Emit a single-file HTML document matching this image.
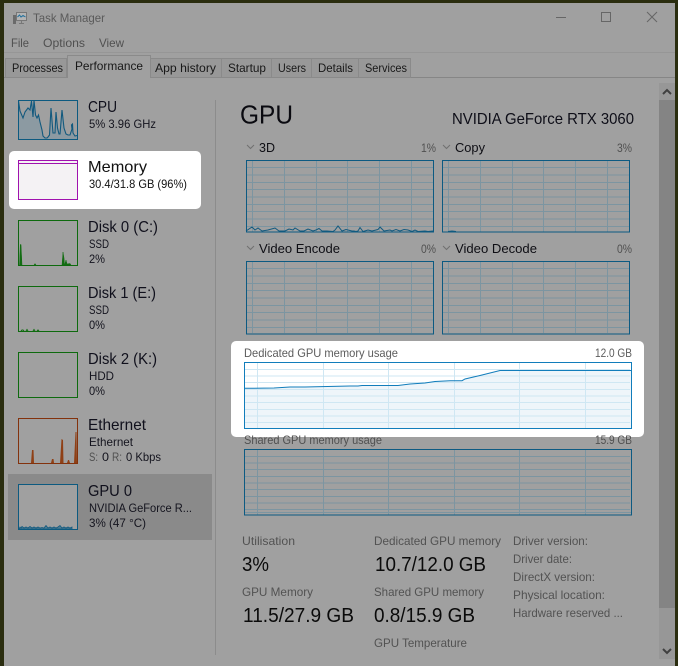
<!DOCTYPE html>
<html><head><meta charset="utf-8"><style>
html,body{margin:0;padding:0;background:#a0a0a0;width:678px;height:666px;overflow:hidden}
svg{display:block;position:absolute;left:0;top:0}
text{font-family:"Liberation Sans",sans-serif;font-size:12px;fill:#1a1a1a}
.g{fill:#505050}.t{font-size:16px;fill:#10101c}.s{font-size:12px;fill:#14141e}
.l{font-size:12px;fill:#525252}.v{font-size:20px;fill:#0a0a0a}.tb{fill:#181818}
</style></head><body>
<svg width="678" height="666" viewBox="0 0 678 666" xmlns="http://www.w3.org/2000/svg">
<defs>
<g id="g1" fill="none">
<path d="M1 7.500H187M1 15H187M1 22.500H187M1 29.500H187M1 37H187M1 44.500H187M1 51.500H187M1 59H187M1 66.500H187M6.500 1V72M38.500 1V72M70.500 1V72M101.500 1V72M133.500 1V72M165.500 1V72"/>
</g>
<g id="g2" fill="none">
<path d="M1 7.500H386M1 14H386M1 20.500H386M1 27.500H386M1 34H386M1 40.500H386M1 47.500H386M1 54H386M1 60.500H386M13.500 1V66M79.500 1V66M144.500 1V66M210.500 1V66M275.500 1V66M341.500 1V66"/>
</g>
</defs>
<rect width="678" height="666" fill="#a0a0a0"/>
<rect width="678" height="3" fill="#2a2d0f"/>
<rect width="4" height="666" fill="#2a2d0f"/>
<rect x="675" width="3" height="666" fill="#2a2d0f"/>

<!-- title -->
<g fill="none">
<rect x="13" y="15" width="3" height="9" fill="#6a6a6a"/>
<rect x="16.500" y="12.500" width="10" height="8" fill="#b4b4b4" stroke="#777"/>
<path d="M17.500 17L19.500 15L21 17L23 15.500L25.500 17" stroke="#1f6f9c"/>
<path d="M19 23.500H24M21.500 21V23" stroke="#777"/>
</g>
<text x="33" y="22" textLength="72" lengthAdjust="spacingAndGlyphs" style="fill:#5a5a5a">Task Manager</text>
<path d="M556 17.500H566" stroke="#666"/>
<rect x="601.500" y="12.500" width="9" height="9" fill="none" stroke="#666"/>
<path d="M647 12L657 22M657 12L647 22" stroke="#666" fill="none"/>

<!-- menu -->
<text x="11" y="47" textLength="18" lengthAdjust="spacingAndGlyphs" class="g">File</text>
<text x="43" y="47" textLength="42" lengthAdjust="spacingAndGlyphs" class="g">Options</text>
<text x="99" y="47" textLength="25" lengthAdjust="spacingAndGlyphs" class="g">View</text>
<rect x="4" y="52" width="671" height="1" fill="#969696"/>

<!-- tabs -->
<rect x="4" y="77" width="671" height="1" fill="#868686"/>
<g fill="#989898" stroke="#8a8a8a">
<rect x="5.500" y="58.500" width="61" height="19"/>
<rect x="150.500" y="58.500" width="71" height="19"/>
<rect x="221.500" y="58.500" width="50" height="19"/>
<rect x="271.500" y="58.500" width="40" height="19"/>
<rect x="311.500" y="58.500" width="47" height="19"/>
<rect x="358.500" y="58.500" width="52" height="19"/>
</g>
<path d="M67.500 78V55.500H150.500V78" fill="#a0a0a0" stroke="#8a8a8a"/>
<rect x="68" y="76" width="82" height="3" fill="#a0a0a0"/>
<text x="12" y="72" textLength="51" lengthAdjust="spacingAndGlyphs" class="tb">Processes</text>
<text x="75" y="70" textLength="68" lengthAdjust="spacingAndGlyphs" class="tb">Performance</text>
<text x="155" y="72" textLength="61" lengthAdjust="spacingAndGlyphs" class="tb">App history</text>
<text x="228" y="72" textLength="38" lengthAdjust="spacingAndGlyphs" class="tb">Startup</text>
<text x="278" y="72" textLength="28" lengthAdjust="spacingAndGlyphs" class="tb">Users</text>
<text x="318" y="72" textLength="35" lengthAdjust="spacingAndGlyphs" class="tb">Details</text>
<text x="365" y="72" textLength="42" lengthAdjust="spacingAndGlyphs" class="tb">Services</text>

<!-- sidebar -->
<rect x="8" y="474" width="204" height="66" fill="#8a8a8a"/>
<rect x="215" y="100" width="1" height="555" fill="#8c8c8c"/>
<rect x="9" y="151" width="192" height="58" rx="5" fill="#fff"/>

<!-- CPU -->
<path d="M18.500 101L20 111L23 118L25 112L28 108L30 110L31.500 101L33 117L34 100L35.500 115L37 118L38.500 115L40 122L42 130L43 136L45 138H47L48 137L49.500 135L51 113L53 133H55L56 115L57.500 128L59 134L60 134L62 110L64 128L66 134L68 135H70L72 129L71.500 125L72.500 124L73 133L75 136L77 135.500L78 139H18.500Z" fill="#8c9aa2"/>
<path d="M18.500 101L20 111L23 118L25 112L28 108L30 110L31.500 101L33 117L34 100L35.500 115L37 118L38.500 115L40 122L42 130L43 136L45 138H47L48 137L49.500 135L51 108L53 133H55L56 112L57.500 128L59 134L60 134L62 110L64 128L66 134L68 135H70L72 129L71.500 125L72.500 124L73 133L75 136L77 135.500" fill="none" stroke="#12597e" stroke-width="1.100"/>
<rect x="18.500" y="100.500" width="59" height="39" fill="none" stroke="#0d5a80"/>
<text x="88" y="112" textLength="29" lengthAdjust="spacingAndGlyphs" class="t">CPU</text>
<text x="89" y="128" textLength="67" lengthAdjust="spacingAndGlyphs" class="s">5%  3.96 GHz</text>

<!-- Memory -->
<rect x="18.500" y="160.500" width="59" height="39" fill="#f4f2f4" stroke="#a012ae"/>
<path d="M19 163.500H77" stroke="#a012ae"/>
<text x="88" y="172" textLength="59" lengthAdjust="spacingAndGlyphs" class="t" style="fill:#111">Memory</text>
<text x="89" y="188" textLength="98" lengthAdjust="spacingAndGlyphs" class="s" style="fill:#111">30.4/31.8 GB (96%)</text>

<!-- Disk 0 -->
<path d="M19.500 265L20.300 244.500L21 244.500L22 265ZM34 265L35 263.500L36 265ZM62 265L63 252L64 258L64.500 265ZM64.500 265L66 260L67 264L70 263.500L71 265Z" fill="#126c12" stroke="#126c12" stroke-width=".5"/>
<rect x="18.500" y="220.500" width="59" height="45" fill="none" stroke="#0e6a0e"/>
<text x="88" y="232" textLength="70" lengthAdjust="spacingAndGlyphs" class="t">Disk 0 (C:)</text>
<text x="89" y="248" textLength="20" lengthAdjust="spacingAndGlyphs" class="s">SSD</text>
<text x="89" y="263" textLength="16" lengthAdjust="spacingAndGlyphs" class="s">2%</text>

<!-- Disk 1 -->
<path d="M21 331L22 330H23L24 331M26 331L27 329.500L28 331M33 331L34 329.500L35 331M37 331L38 330L39 331" fill="none" stroke="#126c12"/>
<rect x="18.500" y="286.500" width="59" height="45" fill="none" stroke="#0e6a0e"/>
<text x="88" y="298" textLength="68" lengthAdjust="spacingAndGlyphs" class="t">Disk 1 (E:)</text>
<text x="89" y="314" textLength="20" lengthAdjust="spacingAndGlyphs" class="s">SSD</text>
<text x="89" y="329" textLength="16" lengthAdjust="spacingAndGlyphs" class="s">0%</text>

<!-- Disk 2 -->
<rect x="18.500" y="352.500" width="59" height="45" fill="none" stroke="#0e6a0e"/>
<text x="88" y="364" textLength="69" lengthAdjust="spacingAndGlyphs" class="t">Disk 2 (K:)</text>
<text x="89" y="380" textLength="25" lengthAdjust="spacingAndGlyphs" class="s">HDD</text>
<text x="89" y="395" textLength="16" lengthAdjust="spacingAndGlyphs" class="s">0%</text>

<!-- Ethernet -->
<path d="M31 463L32 450L33.500 450L34 463ZM51 463L52 459L53.500 459L54 463ZM60 463L61.500 439L63 440L63.500 463ZM67 463L68 460L69 460L70 463ZM74 463L75.500 432L76.500 432L77 463Z" fill="#8f4016"/>
<rect x="18.500" y="418.500" width="59" height="45" fill="none" stroke="#83320c"/>
<text x="88" y="430" textLength="58" lengthAdjust="spacingAndGlyphs" class="t">Ethernet</text>
<text x="89" y="446" textLength="44" lengthAdjust="spacingAndGlyphs" class="s">Ethernet</text>
<text x="89" y="461" textLength="9" lengthAdjust="spacingAndGlyphs" class="g">S:</text>
<text x="102" y="461" textLength="7" lengthAdjust="spacingAndGlyphs" class="s">0</text>
<text x="112" y="461" textLength="10" lengthAdjust="spacingAndGlyphs" class="g">R:</text>
<text x="126" y="461" textLength="35" lengthAdjust="spacingAndGlyphs" class="s">0 Kbps</text>

<!-- GPU 0 -->
<rect x="19" y="485" width="58" height="44" fill="#a0a0a0"/>
<path d="M19 529L20 527L21 528L22 526.500L24 528L26 527L28 528L30 526.500L32 528L34 527L36 528L38 527L40 528L42 527.500L44 528L46 525.500L48 528L50 527L52 528L54 527L56 528L58 527L60 525.500L62 528L64 527L66 528L68 527L70 528L72 527L72 529Z" fill="#4f7c92" stroke="#12597e" stroke-width=".8"/>
<rect x="18.500" y="484.500" width="59" height="45" fill="none" stroke="#0d5a80"/>
<text x="88" y="496" textLength="44" lengthAdjust="spacingAndGlyphs" class="t">GPU 0</text>
<text x="89" y="512" textLength="103" lengthAdjust="spacingAndGlyphs" class="s">NVIDIA GeForce R...</text>
<text x="89" y="527" textLength="57" lengthAdjust="spacingAndGlyphs" class="s">3%  (47 °C)</text>

<!-- Main header -->
<text x="240" y="123.500" textLength="53" lengthAdjust="spacingAndGlyphs" style="font-size:26px;fill:#0a0a10">GPU</text>
<text x="452" y="124" textLength="182" lengthAdjust="spacingAndGlyphs" style="font-size:16px;fill:#0e0e18">NVIDIA GeForce RTX 3060</text>

<!-- small graphs labels -->
<g fill="none" stroke="#707070">
<path d="M247 145L250.500 148.500L254 145M443 145L446.500 148.500L450 145M247 246L250.500 249.500L254 246M443 246L446.500 249.500L450 246"/>
</g>
<text x="259" y="152" textLength="16" lengthAdjust="spacingAndGlyphs" style="font-size:13px;fill:#0e0e14">3D</text>
<text x="421" y="152" textLength="15" lengthAdjust="spacingAndGlyphs" class="g">1%</text>
<text x="455" y="152" textLength="30" lengthAdjust="spacingAndGlyphs" style="font-size:13px;fill:#0e0e14">Copy</text>
<text x="617" y="152" textLength="15" lengthAdjust="spacingAndGlyphs" class="g">3%</text>
<text x="259" y="253" textLength="81" lengthAdjust="spacingAndGlyphs" style="font-size:13px;fill:#0e0e14">Video Encode</text>
<text x="421" y="253" textLength="15" lengthAdjust="spacingAndGlyphs" class="g">0%</text>
<text x="455" y="253" textLength="82" lengthAdjust="spacingAndGlyphs" style="font-size:13px;fill:#0e0e14">Video Decode</text>
<text x="617" y="253" textLength="15" lengthAdjust="spacingAndGlyphs" class="g">0%</text>

<!-- small graphs -->
<use href="#g1" x="246" y="160" stroke="#7c95a1"/>
<use href="#g1" x="442" y="160" stroke="#7c95a1"/>
<use href="#g1" x="246" y="261" stroke="#7c95a1"/>
<use href="#g1" x="442" y="261" stroke="#7c95a1"/>
<path d="M246 231L252 227L255 230L258 228L262 231L268 230L275 228L279 231L285 231L289 229L293 230L295 228L300 231L304 231L308 229L313 231L316 230L319 228.500L322 231L327 231L333 231.500L335 230L338 226L342 231L346 229.500L352 231L354 231L356 231.500L358 231L360 227.500L363 231.500L368 230L372 231L378 229.500L380 227L384 231L390 230L392 231L396 229.500L400 231L404 229.500L408 230L412 231.500L415 230L418 231.500L425 231L428 231.500L433 231" fill="none" stroke="#12597e"/>
<path d="M448 231.500L452 231L456 231.500" fill="none" stroke="#12597e"/>
<g fill="none" stroke="#0c5a82">
<rect x="246.500" y="160.500" width="187" height="71.500"/>
<rect x="442.500" y="160.500" width="187" height="71.500"/>
<rect x="246.500" y="261.500" width="187" height="72.500"/>
<rect x="442.500" y="261.500" width="187" height="72.500"/>
</g>

<!-- Dedicated highlight -->
<rect x="231" y="341" width="413" height="96" rx="5" fill="#fff"/>
<text x="244" y="357" textLength="154" lengthAdjust="spacingAndGlyphs" style="font-size:12px;fill:#5c5c5c">Dedicated GPU memory usage</text>
<text x="595" y="357" textLength="37" lengthAdjust="spacingAndGlyphs" style="font-size:12px;fill:#5c5c5c">12.0 GB</text>
<path d="M244.500 388.300L274 388L290 387H305L350 386H358L362 385.500H398L410 384L425 383L435 381.500L450 380.700H462L465 379L480 375.500L500 370.500H631.500V428H244.500Z" fill="#eef5fa"/>
<use href="#g2" x="244" y="362" stroke="#cfe7f3"/>
<path d="M244.500 388.300L274 388L290 387H305L350 386H358L362 385.500H398L410 384L425 383L435 381.500L450 380.700H462L465 379L480 375.500L500 370.500H631.500" fill="none" stroke="#117dbb"/>
<rect x="244.500" y="362.500" width="387" height="66" fill="none" stroke="#117dbb"/>

<!-- Shared -->
<text x="244" y="444" textLength="138" lengthAdjust="spacingAndGlyphs" class="g">Shared GPU memory usage</text>
<text x="595" y="444" textLength="37" lengthAdjust="spacingAndGlyphs" class="g">15.9 GB</text>
<use href="#g2" x="244" y="449" stroke="#7c95a1"/>
<path d="M245 512.500H631" stroke="#7c95a1"/>
<rect x="244.500" y="449.500" width="387" height="65.500" fill="none" stroke="#0c5a82"/>

<!-- Stats -->
<text x="242" y="545" textLength="53" lengthAdjust="spacingAndGlyphs" class="l">Utilisation</text>
<text x="242" y="571" textLength="27" lengthAdjust="spacingAndGlyphs" class="v">3%</text>
<text x="242" y="596" textLength="71" lengthAdjust="spacingAndGlyphs" class="l">GPU Memory</text>
<text x="243" y="622" textLength="111" lengthAdjust="spacingAndGlyphs" class="v">11.5/27.9 GB</text>
<text x="374" y="545" textLength="127" lengthAdjust="spacingAndGlyphs" class="l">Dedicated GPU memory</text>
<text x="375" y="571" textLength="111" lengthAdjust="spacingAndGlyphs" class="v">10.7/12.0 GB</text>
<text x="374" y="596" textLength="110" lengthAdjust="spacingAndGlyphs" class="l">Shared GPU memory</text>
<text x="374" y="622" textLength="101" lengthAdjust="spacingAndGlyphs" class="v">0.8/15.9 GB</text>
<text x="374" y="647" textLength="93" lengthAdjust="spacingAndGlyphs" class="l">GPU Temperature</text>
<text x="513" y="545" textLength="75" lengthAdjust="spacingAndGlyphs" class="l">Driver version:</text>
<text x="513" y="563" textLength="59" lengthAdjust="spacingAndGlyphs" class="l">Driver date:</text>
<text x="513" y="581" textLength="82" lengthAdjust="spacingAndGlyphs" class="l">DirectX version:</text>
<text x="513" y="599" textLength="92" lengthAdjust="spacingAndGlyphs" class="l">Physical location:</text>
<text x="513" y="617" textLength="110" lengthAdjust="spacingAndGlyphs" class="l">Hardware reserved ...</text>

<!-- Scrollbar -->
<rect x="659" y="83" width="16" height="576" fill="#979797"/>
<rect x="659" y="100" width="16" height="508" fill="#848484"/>
<path d="M663 94L667 90L671 94" fill="none" stroke="#404040" stroke-width="2"/>
<path d="M663 649L667 653L671 649" fill="none" stroke="#404040" stroke-width="2"/>
</svg>
</body></html>
